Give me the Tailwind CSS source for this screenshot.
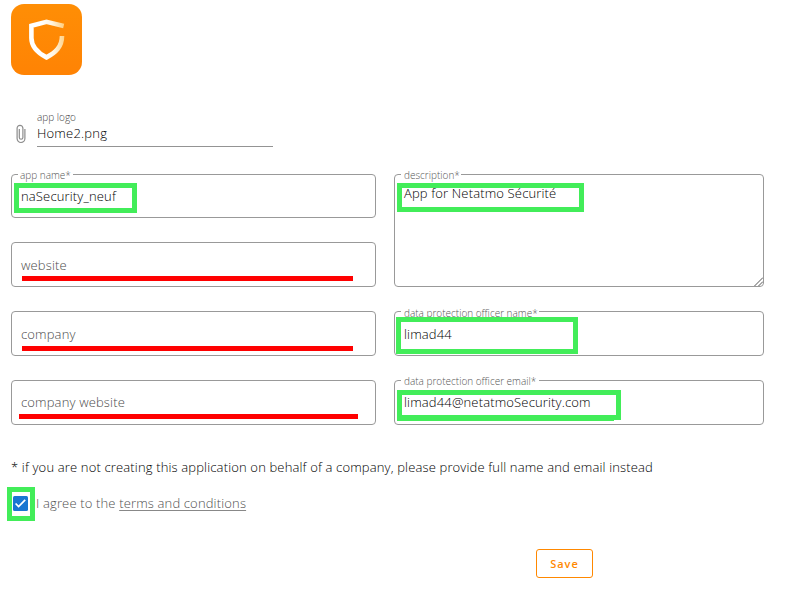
<!DOCTYPE html>
<html lang="en">
<head>
<meta charset="utf-8">
<title>App settings</title>
<script src="https://cdn.jsdelivr.net/npm/@tailwindcss/browser@4"></script>
</head>
<body class="relative h-[597px] w-[798px] overflow-hidden bg-white font-['Open_Sans','Noto_Sans',sans-serif] text-[13px] font-light leading-5 tracking-[0.15px] text-[#000]">
<main class="flex flex-col pl-[11px] pt-1">
  <svg class="size-[71px]" viewBox="0 0 71 71" fill="none">
    <defs>
      <linearGradient id="bg" x1="0" y1="0" x2="0" y2="1"><stop stop-color="#ff8e05"/><stop offset="1" stop-color="#ff8304"/></linearGradient>
      <linearGradient id="sh" gradientUnits="userSpaceOnUse" x1="32" y1="35" x2="54" y2="33"><stop stop-color="#fff"/><stop offset=".45" stop-color="#fff5e2"/><stop offset="1" stop-color="#ffcf80"/></linearGradient>
    </defs>
    <rect width="71" height="71" rx="13" fill="url(#bg)"/>
    <path d="M52.7 21.9 35.5 17.8 20.4 21.8V34C20.4 43.5 27 49 35.5 53.4 44.5 48.6 51 43 51 32" stroke="url(#sh)" stroke-width="4.6"/>
  </svg>

  <div class="mt-[35px] flex h-[37px] w-[262px]">
    <svg class="mt-[14px] h-[20px] w-[10px] shrink-0 ml-[5px]" viewBox="0 0 10 20" fill="none" stroke="#8c8c8c" stroke-width="1.2"><path d="M8.9 5v9.6a3.9 3.9 0 0 1-7.8 0V4.2a2.9 2.9 0 0 1 5.8 0v9.2a1.8 1.8 0 0 1-3.6 0V5"/></svg>
    <div class="ml-[11px] flex-1 border-b border-[#949494]">
      <div class="h-[13px] pt-px text-[10px] leading-[13px] tracking-normal text-[#444]">app logo</div>
      <div class="tracking-[0.2px]">Home2.png</div>
    </div>
  </div>

  <div class="mt-[27px] flex gap-[18px]">
    <section class="flex w-[365px] flex-col">
      <div class="relative h-[44px] rounded-[4px] border border-[#999] pl-[9px] pt-[11px]">naSecurity_neuf
        <span class="absolute left-[6px] top-[-7px] w-[55px] whitespace-nowrap bg-white pl-[2px] text-[10px] leading-[14px] tracking-normal text-[#555]">app name*</span></div>
      <div class="mt-[24px] h-[45px] rounded-[4px] border border-[#999] pl-[9px] pt-[12px] text-[#4a4a4a]">website</div>
      <div class="mt-[24px] h-[45px] rounded-[4px] border border-[#999] pl-[9px] pt-[12px] text-[#4a4a4a]">company</div>
      <div class="mt-[24px] h-[45px] rounded-[4px] border border-[#999] pl-[9px] pt-[11px] text-[#4a4a4a]">company website</div>
    </section>
    <section class="flex w-[370px] flex-col">
      <div class="relative h-[113px] rounded-[4px] border border-[#999] pl-[9px] pt-[8px]"><span class="relative z-20">App for Netatmo Sécurité</span>
        <span class="absolute left-[6px] top-[-7px] w-[60px] whitespace-nowrap bg-white pl-[3px] text-[10px] leading-[14px] tracking-normal text-[#555]">description*</span>
        <svg class="absolute bottom-0 right-0 size-[9px]" viewBox="0 0 9 9" stroke="#555" fill="none"><path d="M.5 9 9 .5M4.5 9 9 4.5"/></svg></div>
      <div class="relative mt-[24px] h-[45px] rounded-[4px] border border-[#999] pl-[9px] pt-[12px]">limad44
        <span class="absolute left-[6px] top-[-6px] w-[138px] whitespace-nowrap bg-white pl-[3px] text-[10px] leading-[14px] tracking-normal text-[#555]">data protection officer name*</span></div>
      <div class="relative mt-[24px] h-[45px] rounded-[4px] border border-[#999] pl-[9px] pt-[11px]"><span class="relative z-20">limad44@netatmoSecurity.com</span>
        <span class="absolute left-[6px] top-[-7px] w-[138px] whitespace-nowrap bg-white pl-[3px] text-[10px] leading-[14px] tracking-normal text-[#555]">data protection officer email*</span></div>
    </section>
  </div>

  <p class="mt-[32px]">* if you are not creating this application on behalf of a company, please provide full name and email instead</p>
  <div class="mt-[16px] flex h-5 items-center text-[#4f4f4f]">
    <svg class="ml-[2px] size-[15px]" viewBox="0 0 15 15"><rect width="15" height="15" rx="1.5" fill="#1976d2"/><path d="m2.6 7.5 3 3.1 6.6-6.7" stroke="#fff" stroke-width="1.7" fill="none"/></svg>
    <span class="ml-[8px]">I agree to the <span class="underline decoration-[#888] decoration-1 underline-offset-2">terms and conditions</span></span>
  </div>
  <button class="ml-[525px] mt-[36px] h-[29px] w-[57px] rounded-[3px] border border-[#ff8800] text-[11px] font-semibold leading-5 tracking-[1px] text-[#ff8800]">Save</button>
</main>

<div class="absolute left-[14px] top-[183px] z-10 h-[30px] w-[123px] border-[5px] border-[#42ed59]"></div>
<div class="absolute left-[397px] top-[183px] z-10 h-[29px] w-[187px] border-[5px] border-[#42ed59]"></div>
<div class="absolute left-[396px] top-[317px] z-10 h-[37px] w-[182px] border-[5px] border-[#42ed59]"></div>
<div class="absolute left-[397px] top-[390px] z-10 h-[30px] w-[224px] border-[5px] border-[#42ed59]"></div>
<div class="absolute left-[397px] top-[420px] z-10 h-px w-[217px] bg-[#42ed59]"></div>
<div class="absolute left-[7px] top-[487px] z-10 h-[34px] w-[28px] border-[5px] border-[#42ed59]"></div>
<div class="absolute left-[22px] top-[276px] z-10 h-[5px] w-[331px] bg-[#ff0000]"></div>
<div class="absolute left-[22px] top-[346px] z-10 h-[5px] w-[331px] bg-[#ff0000]"></div>
<div class="absolute left-[19px] top-[414px] z-10 h-[5px] w-[339px] bg-[#ff0000]"></div>
</body>
</html>
